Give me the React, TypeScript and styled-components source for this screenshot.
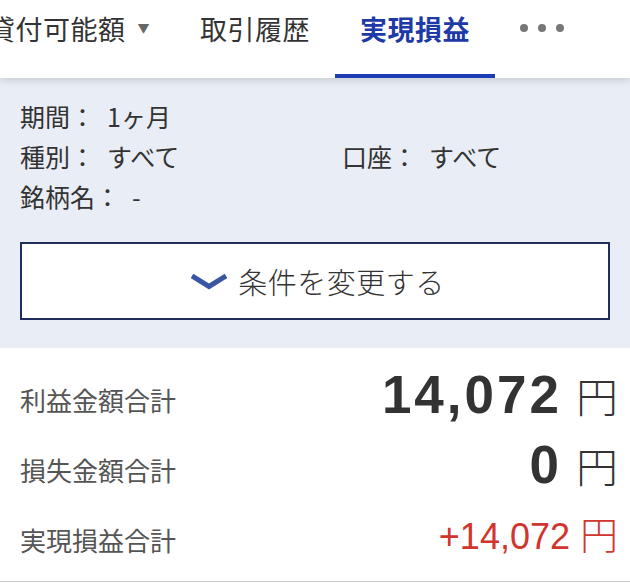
import React from "react";
import styled, { createGlobalStyle } from "styled-components";

const GlobalStyle = createGlobalStyle`
  body {
    margin: 0;
    background: #ffffff;
    font-family: "Noto Sans CJK JP", "Noto Sans", sans-serif;
    color: #333333;
  }
`;

const Page = styled.div`
  width: 630px;
  overflow: hidden;
`;

const TabBar = styled.nav`
  position: relative;
  z-index: 1;
  height: 78px;
  background: #ffffff;
  box-shadow: 0 2px 8px rgba(0, 0, 0, 0.16);
  overflow: hidden;
`;

const TabList = styled.div`
  display: flex;
  height: 100%;
  margin-left: -37px;
`;

interface TabProps {
  $active?: boolean;
}

const Tab = styled.div<TabProps>`
  box-sizing: border-box;
  display: flex;
  align-items: center;
  gap: 12px;
  height: 78px;
  padding: 0 25px 18px;
  flex-shrink: 0;
  font-size: 27px;
  line-height: 1;
  letter-spacing: 0.5px;
  white-space: nowrap;
  border-bottom: 4px solid ${(p) => (p.$active ? "#1e3cb4" : "transparent")};
  color: ${(p) => (p.$active ? "#1e3aa6" : "#333333")};
  font-weight: ${(p) => (p.$active ? 700 : 400)};
`;

const Caret = styled.span`
  font-size: 12px;
  color: #666666;
`;

const Dots = styled.div`
  display: flex;
  gap: 10px;
`;

const Dot = styled.span`
  width: 8px;
  height: 8px;
  border-radius: 50%;
  background: #777777;
`;

const FilterPanel = styled.section`
  background: #e9edf5;
  padding: 18px 20px 28px;
`;

const FilterGrid = styled.div`
  display: grid;
  grid-template-columns: 322px 1fr;
  grid-template-rows: repeat(3, 40px);
  grid-template-areas:
    "period ."
    "kind account"
    "name .";
  align-items: center;
`;

interface FilterItemProps {
  $area: string;
}

const FilterItem = styled.div<FilterItemProps>`
  grid-area: ${(p) => p.$area};
  display: flex;
  font-size: 25px;
  line-height: 1;
  color: #333333;
`;

const FilterValue = styled.span`
  margin-left: 12px;
`;

const ChangeButton = styled.button`
  box-sizing: border-box;
  margin-top: 26px;
  width: 100%;
  height: 78px;
  display: flex;
  align-items: center;
  justify-content: center;
  gap: 11px;
  background: #ffffff;
  border: 2px solid #1f2e5c;
  font-family: "Noto Sans CJK JP", sans-serif;
  font-size: 29px;
  font-weight: 300;
  color: #333333;
  letter-spacing: 0.5px;
  padding: 0 0 0 6px;
`;

const Summary = styled.section`
  padding: 17px 12px 6px 20px;
  border-bottom: 1px solid #cccccc;
`;

const SummaryRow = styled.div`
  height: 70px;
  display: flex;
  align-items: center;
  justify-content: space-between;
`;

const SummaryLabel = styled.span`
  font-size: 26px;
  line-height: 1;
  color: #555555;
`;

const Amount = styled.div`
  display: flex;
  align-items: baseline;
  line-height: 1;
  margin-bottom: 11px;
`;

interface FigureProps {
  $bold?: boolean;
  $color?: string;
}

const Figure = styled.span<FigureProps>`
  font-family: "Liberation Sans", Arial, sans-serif;
  font-size: ${(p) => (p.$bold ? "53px" : "36px")};
  font-weight: ${(p) => (p.$bold ? 700 : 400)};
  letter-spacing: ${(p) => (p.$bold ? "3px" : "0")};
  color: ${(p) => p.$color ?? "#333333"};
`;

const Yen = styled.span<FigureProps>`
  margin-left: ${(p) => (p.$bold ? "14px" : "10px")};
  font-family: "Noto Sans CJK JP", sans-serif;
  font-size: ${(p) => (p.$bold ? "42px" : "38px")};
  font-weight: 300;
  color: ${(p) => p.$color ?? "#333333"};
`;

const Chevron = () => (
  <svg width="36" height="17" viewBox="0 0 36 17">
    <path d="M1 3 L18 13.5 L35 3" fill="none" stroke="#3a55a4" strokeWidth="5" />
  </svg>
);

const filters = [
  { area: "period", label: "期間：", value: "1ヶ月" },
  { area: "kind", label: "種別：", value: "すべて" },
  { area: "account", label: "口座：", value: "すべて" },
  { area: "name", label: "銘柄名：", value: "-" },
];

const rows = [
  { label: "利益金額合計", value: "14,072", bold: true },
  { label: "損失金額合計", value: "0", bold: true },
  { label: "実現損益合計", value: "+14,072", bold: false, color: "#d0352e" },
];

export default function App() {
  return (
    <Page>
      <GlobalStyle />
      <TabBar>
        <TabList>
          <Tab>
            貸付可能額<Caret>▼</Caret>
          </Tab>
          <Tab>取引履歴</Tab>
          <Tab $active>実現損益</Tab>
          <Tab>
            <Dots>
              <Dot />
              <Dot />
              <Dot />
            </Dots>
          </Tab>
        </TabList>
      </TabBar>
      <FilterPanel>
        <FilterGrid>
          {filters.map((f) => (
            <FilterItem key={f.label} $area={f.area}>
              {f.label}
              <FilterValue>{f.value}</FilterValue>
            </FilterItem>
          ))}
        </FilterGrid>
        <ChangeButton>
          <Chevron />
          条件を変更する
        </ChangeButton>
      </FilterPanel>
      <Summary>
        {rows.map((r) => (
          <SummaryRow key={r.label}>
            <SummaryLabel>{r.label}</SummaryLabel>
            <Amount>
              <Figure $bold={r.bold} $color={r.color}>
                {r.value}
              </Figure>
              <Yen $bold={r.bold} $color={r.color}>
                円
              </Yen>
            </Amount>
          </SummaryRow>
        ))}
      </Summary>
    </Page>
  );
}
